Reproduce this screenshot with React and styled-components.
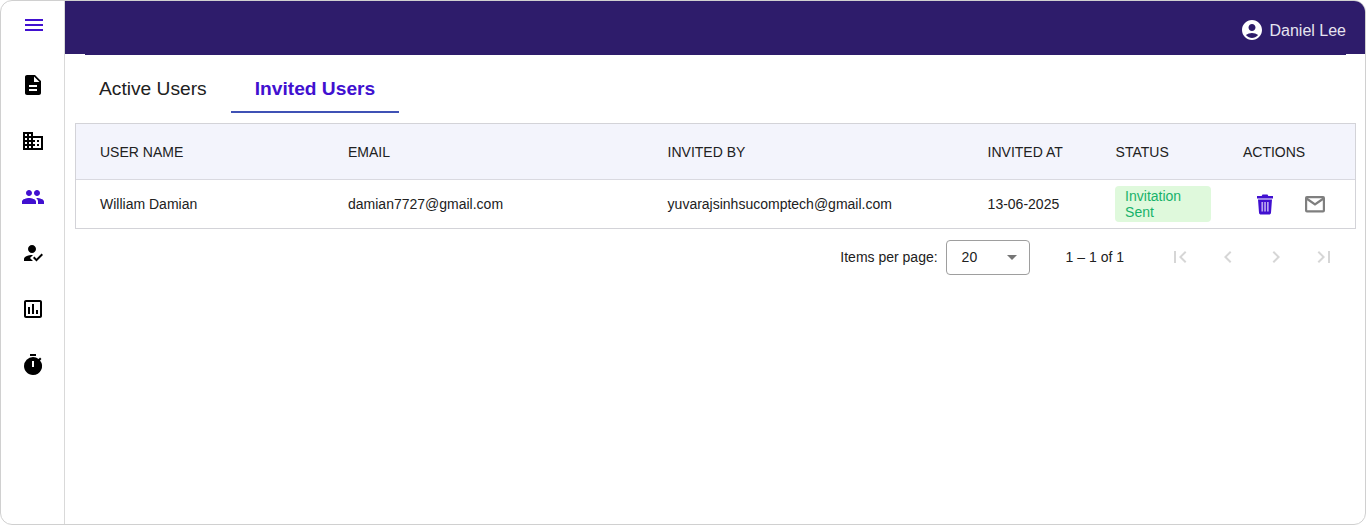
import React from "react";
import styled, { createGlobalStyle } from "styled-components";
import {
  MdMenu,
  MdDescription,
  MdDomain,
  MdPeople,
  MdHowToReg,
  MdOutlineAssessment,
  MdTimer,
  MdAccountCircle,
  MdArrowDropDown,
  MdFirstPage,
  MdLastPage,
  MdChevronLeft,
  MdChevronRight
} from "react-icons/md";

const GlobalStyle = createGlobalStyle`
  html, body {
    margin: 0;
    background: #fff;
    font-family: "Liberation Sans", Arial, sans-serif;
  }
`;

const Frame = styled.div`
  box-sizing: border-box;
  width: 1366px;
  height: 525px;
  display: flex;
  border: 1px solid #d0d0d0;
  border-radius: 12px;
  overflow: hidden;
`;

const Sidebar = styled.nav`
  width: 63px;
  flex: none;
  display: flex;
  flex-direction: column;
  align-items: center;
  padding-top: 12px;
  border-right: 1px solid #d9d9d9;
`;

const NavItem = styled.div`
  height: 56px;
  width: 100%;
  display: flex;
  align-items: center;
  justify-content: center;
  font-size: 24px;
  color: ${props => (props.active ? "#4110d0" : "#000")};
`;

const MenuItem = styled(NavItem)`
  box-sizing: border-box;
  height: 24px;
  margin-bottom: 20px;
  padding-left: 2px;
  color: #4110d0;
`;

const Main = styled.main`
  flex: 1;
  min-width: 0;
  display: flex;
  flex-direction: column;
`;

const Header = styled.header`
  position: relative;
  box-sizing: border-box;
  height: 53px;
  flex: none;
  display: flex;
  align-items: center;
  justify-content: flex-end;
  padding: 7px 19px 0 0;
  background: #2e1c6b;
  color: #e6e4f0;
  font-size: 16px;

  &::after {
    content: "";
    position: absolute;
    left: 20px;
    right: 19px;
    bottom: -1px;
    height: 1px;
    background: #2e1c6b;
  }
`;

const UserName = styled.span`
  margin-left: 6px;
`;

const AvatarIcon = styled(MdAccountCircle)`
  font-size: 24px;
  margin-top: -3px;
  color: #fff;
`;

const Content = styled.div`
  padding: 10px 9px 0 10px;
`;

const Tabs = styled.div`
  display: flex;
  height: 49px;
`;

const Tab = styled.div`
  box-sizing: border-box;
  padding: 2px 24px 0;
  height: 49px;
  display: flex;
  align-items: center;
  font-size: 19.2px;
  font-weight: ${props => (props.active ? 700 : 400)};
  color: ${props => (props.active ? "#4110d0" : "#212121")};
  border-bottom: 2px solid ${props => (props.active ? "#3f51b5" : "transparent")};
`;

const Table = styled.div`
  margin-top: 10px;
  border: 1px solid #d3d3d8;
  color: #212121;
  font-size: 14px;
`;

const Row = styled.div`
  display: grid;
  grid-template-columns: 248px 319.6px 320px 128px 127.4px 1fr;
  align-items: center;
`;

const HeadRow = styled(Row)`
  height: 55px;
  background: #f3f4fc;
  border-bottom: 1px solid #d9d9e0;
`;

const BodyRow = styled(Row)`
  height: 48px;
`;

const Cell = styled.div`
  padding-left: 24px;
  white-space: nowrap;
`;

const StatusChip = styled.div`
  box-sizing: border-box;
  width: 96px;
  height: 36px;
  margin-left: -1px;
  padding: 2px 10.5px;
  line-height: 16px;
  white-space: normal;
  border-radius: 4px;
  background: #dff9dc;
  color: #17b26a;
`;

const Actions = styled(Cell)`
  display: flex;
  align-items: center;
  padding-left: 34px;
  gap: 26px;
`;

const Pagination = styled.div`
  display: flex;
  align-items: center;
  justify-content: flex-end;
  height: 36px;
  margin-top: 10px;
  padding-right: 8px;
  color: #212121;
  font-size: 14px;
`;

const PerPageLabel = styled.span`
  margin-right: 8px;
`;

const PageSelect = styled.div`
  box-sizing: border-box;
  width: 84px;
  height: 35px;
  padding: 0 2px 0 15px;
  display: flex;
  align-items: center;
  justify-content: space-between;
  border: 1px solid #9e9e9e;
  border-radius: 4px;
`;

const SelectArrow = styled(MdArrowDropDown)`
  font-size: 24px;
  margin-right: 3px;
  color: #757575;
`;

const RangeLabel = styled.span`
  margin-left: 36px;
  margin-right: 32px;
`;

const PageButton = styled.div`
  width: 48px;
  height: 36px;
  display: flex;
  align-items: center;
  justify-content: center;
  font-size: 24px;
  color: #d6d6d6;
`;

const TrashIcon = () => (
  <svg width="24" height="24" viewBox="0 0 24 24">
    <path
      fill="#4110d0"
      d="M9.5 2.5h5l.8 1.5H20v2.6H4V4h4.7zM5 7.5h14l-1 13.2c-.1 1-.9 1.8-2 1.8H8c-1.1 0-1.9-.8-2-1.8z"
    />
    <path
      fill="#b9a5ee"
      d="M8.4 10h1.7v9.5H8.4zM11.2 10h1.7v9.5h-1.7zM14 10h1.7v9.5H14z"
    />
  </svg>
);

const MailIcon = () => (
  <svg width="24" height="24" viewBox="0 0 24 24" fill="none" stroke="#7f7f7f" strokeWidth="2.2">
    <rect x="3.1" y="5.1" width="17.8" height="14.3" rx="0.8" />
    <path d="M3.5 6.5l8.5 6 8.5-6" />
  </svg>
);

const navIcons = [MdDescription, MdDomain, MdPeople, MdHowToReg, MdOutlineAssessment, MdTimer];
const pageIcons = [MdFirstPage, MdChevronLeft, MdChevronRight, MdLastPage];
const columns = ["USER NAME", "EMAIL", "INVITED BY", "INVITED AT", "STATUS", "ACTIONS"];

export default function App() {
  return (
    <>
      <GlobalStyle />
      <Frame>
        <Sidebar>
          <MenuItem>
            <MdMenu />
          </MenuItem>
          {navIcons.map((Icon, i) => (
            <NavItem key={i} active={i === 2}>
              <Icon />
            </NavItem>
          ))}
        </Sidebar>
        <Main>
          <Header>
            <AvatarIcon />
            <UserName>Daniel Lee</UserName>
          </Header>
          <Content>
            <Tabs>
              <Tab>Active Users</Tab>
              <Tab active>Invited Users</Tab>
            </Tabs>
            <Table>
              <HeadRow>
                {columns.map(name => (
                  <Cell key={name}>{name}</Cell>
                ))}
              </HeadRow>
              <BodyRow>
                <Cell>William Damian</Cell>
                <Cell>damian7727@gmail.com</Cell>
                <Cell>yuvarajsinhsucomptech@gmail.com</Cell>
                <Cell>13-06-2025</Cell>
                <Cell>
                  <StatusChip>Invitation Sent</StatusChip>
                </Cell>
                <Actions>
                  <TrashIcon />
                  <MailIcon />
                </Actions>
              </BodyRow>
            </Table>
            <Pagination>
              <PerPageLabel>Items per page:</PerPageLabel>
              <PageSelect>
                <span>20</span>
                <SelectArrow />
              </PageSelect>
              <RangeLabel>1 – 1 of 1</RangeLabel>
              {pageIcons.map((Icon, i) => (
                <PageButton key={i}>
                  <Icon />
                </PageButton>
              ))}
            </Pagination>
          </Content>
        </Main>
      </Frame>
    </>
  );
}
